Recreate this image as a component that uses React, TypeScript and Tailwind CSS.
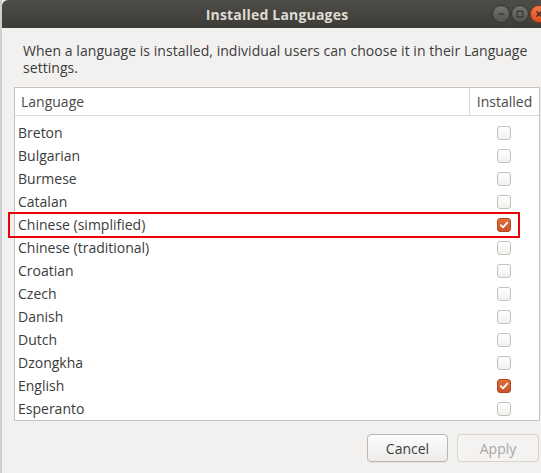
import React from "react";

const languages = [
  { name: "Breton", installed: false },
  { name: "Bulgarian", installed: false },
  { name: "Burmese", installed: false },
  { name: "Catalan", installed: false },
  { name: "Chinese (simplified)", installed: true, marked: true },
  { name: "Chinese (traditional)", installed: false },
  { name: "Croatian", installed: false },
  { name: "Czech", installed: false },
  { name: "Danish", installed: false },
  { name: "Dutch", installed: false },
  { name: "Dzongkha", installed: false },
  { name: "English", installed: true },
  { name: "Esperanto", installed: false },
];

function Check({ on }: { on: boolean }) {
  if (on) {
    return (
      <span className="flex h-[14px] w-[14px] items-center justify-center rounded-[3px] border border-[#b5481f] bg-gradient-to-b from-[#e26f3e] to-[#c9532a]">
        <svg width="10" height="10" viewBox="0 0 10 10">
          <path d="M1.8 5.2 L4 7.4 L8.3 2.6" fill="none" stroke="white" strokeWidth="1.8" strokeLinecap="round" strokeLinejoin="round" />
        </svg>
      </span>
    );
  }
  return (
    <span className="block h-[14px] w-[14px] rounded-[3px] border border-[#c4c1bc] bg-gradient-to-b from-white to-[#f1f0ee]" />
  );
}

function TitleButton({ kind }: { kind: "min" | "max" | "close" }) {
  const close = kind === "close";
  return (
    <span
      className={
        close
          ? "flex h-[18px] w-[18px] items-center justify-center rounded-full border border-[#8f3a17] bg-gradient-to-b from-[#f4784a] to-[#dd4f1c]"
          : "flex h-[18px] w-[18px] items-center justify-center rounded-full border border-[#35342f] bg-gradient-to-b from-[#75736e] to-[#55534e]"
      }
    >
      <svg width="10" height="10" viewBox="0 0 10 10">
        {kind === "min" && <path d="M2 5 H8" stroke="#3b3a36" strokeWidth="1.4" />}
        {kind === "max" && <rect x="2.2" y="2.2" width="5.6" height="5.6" fill="none" stroke="#3b3a36" strokeWidth="1.3" />}
        {close && <path d="M2.5 2.5 L7.5 7.5 M7.5 2.5 L2.5 7.5" stroke="#3b2a22" strokeWidth="1.4" />}
      </svg>
    </span>
  );
}

export default function App() {
  return (
    <div
      className="flex h-[473px] w-[541px] overflow-hidden bg-[#cfcfcf] text-[#3c3c3c]"
      style={{ fontFamily: '"Open Sans", "DejaVu Sans", sans-serif' }}
    >
      <div className="ml-[2px] flex w-[550px] shrink-0 flex-col bg-[#f2f1f0]">
        {/* title bar */}
        <div className="relative flex h-[28px] shrink-0 items-center justify-center rounded-t-[6px] bg-gradient-to-b from-[#4d4c47] to-[#3d3c38]">
          <span className="text-[14px] font-bold tracking-[0.2px] text-[#dfdbd2]">Installed Languages</span>
          <div className="absolute right-[4px] top-[5px] flex gap-[1px]">
            <TitleButton kind="min" />
            <TitleButton kind="max" />
            <TitleButton kind="close" />
          </div>
        </div>

        <div className="flex flex-1 flex-col px-[12px]">
          <p className="mt-[14px] pl-[9px] text-[14px] leading-[17px] tracking-[0.05px] text-[#3c3c3c]">
            When a language is installed, individual users can choose it in their Language settings.
          </p>

          <div className="mt-[11px] h-[334px] border border-[#c6c3be] bg-white">
            <div className="flex h-[28px] border-b border-[#dcdad6] text-[14px] text-[#4a4a4a]">
              <div className="flex flex-1 items-center pl-[6px]">Language</div>
              <div className="flex w-[70px] items-center justify-center border-l border-[#dcdad6]">Installed</div>
            </div>
            <div className="pt-[5px]">
              {languages.map((l) => (
                <div key={l.name} className="relative flex h-[23px] items-center text-[14px]">
                  <div className="flex-1 pl-[3px]">{l.name}</div>
                  <div className="flex w-[70px] justify-center">
                    <Check on={l.installed} />
                  </div>
                  {l.marked && (
                    <span className="pointer-events-none absolute left-[-7px] top-[-1px] h-[26px] w-[512px] border-2 border-[#e8000b]" />
                  )}
                </div>
              ))}
            </div>
          </div>

          <div className="mt-[13px] flex justify-end gap-[9px] pr-[1px]">
            <button className="h-[28px] w-[81px] rounded-[4px] border border-[#b9b6b1] bg-gradient-to-b from-[#fcfcfc] to-[#edeceb] text-[14px] text-[#3c3c3c] shadow-[0_1px_0_rgba(0,0,0,0.05)]">
              Cancel
            </button>
            <button className="h-[28px] w-[82px] rounded-[4px] border border-[#d8d5d1] bg-[#f4f3f2] text-[14px] text-[#a8a7a5]">
              Apply
            </button>
          </div>
        </div>
      </div>
    </div>
  );
}
